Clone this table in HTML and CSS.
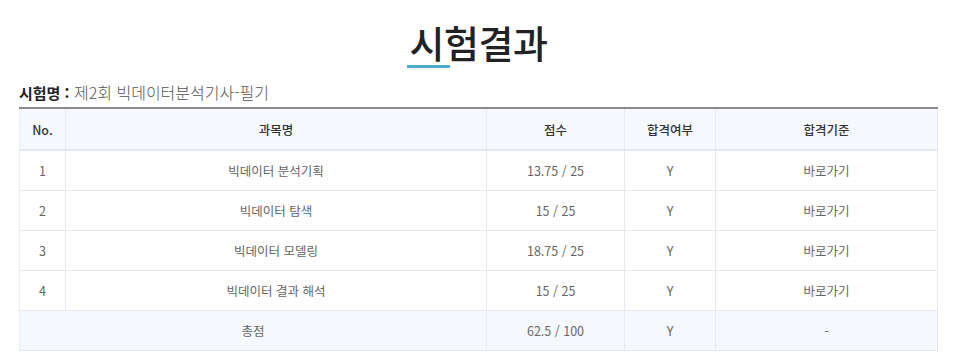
FILE: index.html
```html
<!DOCTYPE html>
<html lang="ko">
<head>
<meta charset="utf-8">
<link rel="stylesheet" href="styles.css">
</head>
<body>
<div class="page">
  <h1 class="title"><span class="first">시</span>험결과</h1>
  <p class="exam"><strong>시험명 :</strong> <span class="exam-name">제2회 빅데이터분석기사-필기</span></p>
  <table class="result">
    <thead>
      <tr>
        <th class="c-no">No.</th>
        <th class="c-name">과목명</th>
        <th class="c-score">점수</th>
        <th class="c-pass">합격여부</th>
        <th class="c-std">합격기준</th>
      </tr>
    </thead>
    <tbody>
      <tr><td>1</td><td>빅데이터 분석기획</td><td>13.75 / 25</td><td>Y</td><td>바로가기</td></tr>
      <tr><td>2</td><td>빅데이터 탐색</td><td>15 / 25</td><td>Y</td><td>바로가기</td></tr>
      <tr><td>3</td><td>빅데이터 모델링</td><td>18.75 / 25</td><td>Y</td><td>바로가기</td></tr>
      <tr><td>4</td><td>빅데이터 결과 해석</td><td>15 / 25</td><td>Y</td><td>바로가기</td></tr>
      <tr class="total"><td colspan="2">총점</td><td>62.5 / 100</td><td>Y</td><td>-</td></tr>
    </tbody>
  </table>
</div>
</body>
</html>
```
FILE: styles.css
```css
html, body {
  margin: 0;
  padding: 0;
  background: #fff;
}
body {
  font-family: "Noto Sans CJK KR", "Noto Sans", sans-serif;
  color: #333;
}
.page {
  padding: 0 22px 0 19px;
}
.title {
  margin: 0;
  padding-top: 17px;
  height: 53px;
  text-align: center;
  font-size: 38px;
  line-height: 50px;
  font-weight: 500;
  color: #222;
  letter-spacing: -0.5px;
}
.title .first {
  display: inline-block;
  position: relative;
}
.title .first::after {
  content: "";
  position: absolute;
  left: -3px;
  right: -6px;
  bottom: -1px;
  height: 3px;
  background: #4faad6;
}
.exam {
  margin: 0;
  padding-top: 11px;
  height: 26px;
  font-size: 16px;
  line-height: 22px;
  color: #555;
}
.exam strong {
  font-size: 15px;
  font-weight: 700;
  color: #222;
}
.exam-name {
  font-weight: 300;
}
.result {
  width: 100%;
  border-collapse: collapse;
  border-top: 2px solid #8a8a8a;
  font-size: 12.5px;
  color: #666;
  text-align: center;
}
.result th, .result td {
  border: 1px solid #e6e9ee;
  padding: 0;
  font-weight: 400;
}
.result th {
  height: 40px;
  background: #f5f9fd;
  color: #333;
  font-weight: 500;
  border-bottom: 2px solid #e3e6ea;
}
.result td {
  height: 39px;
}
.result tr > :first-child { border-left: 1px solid #eceef1; }
.c-no { width: 45px; }
.c-name { width: 420px; }
.c-score { width: 137px; }
.c-pass { width: 90px; }
.result .total td {
  background: #f5f9fd;
}
```
